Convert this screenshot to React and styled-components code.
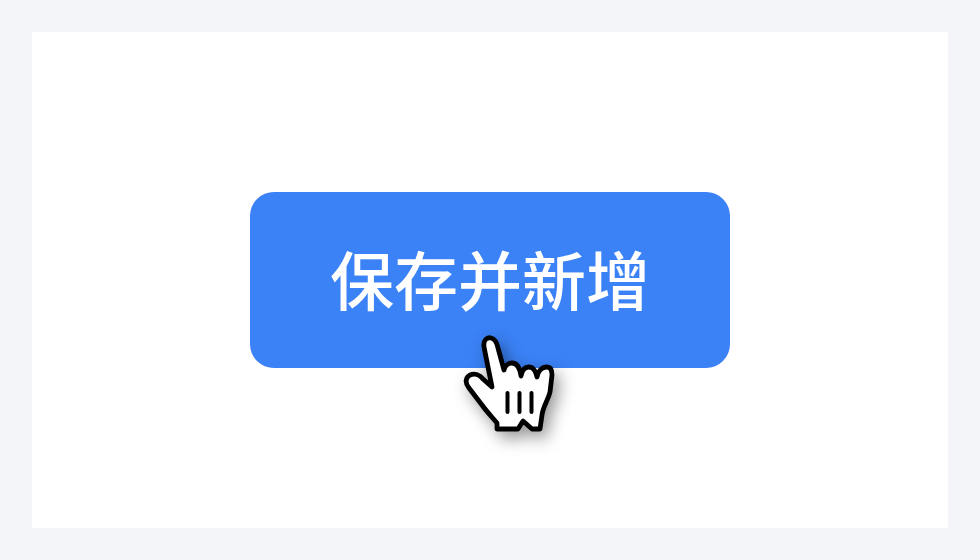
import React from 'react';
import styled, { createGlobalStyle } from 'styled-components';

const GlobalStyle = createGlobalStyle`
  html, body {
    margin: 0;
    padding: 0;
  }
  body {
    background-color: #f3f5f9;
  }
`;

const Page = styled.div`
  box-sizing: border-box;
  width: 980px;
  height: 560px;
  padding: 32px;
  background-color: #f3f5f9;
`;

const Panel = styled.main`
  display: flex;
  align-items: center;
  justify-content: center;
  height: 100%;
  background-color: #ffffff;
`;

const ButtonWrap = styled.div`
  position: relative;
  width: 480px;
  height: 176px;
`;

const SaveButton = styled.button`
  display: block;
  width: 100%;
  height: 100%;
  padding: 0 0 6px;
  border: 0;
  border-radius: 24px;
  background-color: #3b82f6;
  color: #ffffff;
  font-family: 'Noto Sans CJK SC', 'Noto Sans', sans-serif;
  font-size: 64px;
  font-weight: 500;
  line-height: 1;
`;

const Cursor = styled.svg`
  position: absolute;
  left: 200px;
  top: 133px;
  width: 120px;
  height: 120px;
  filter: drop-shadow(5px 7px 8px rgba(0, 0, 0, 0.4));
`;

const HandCursor = () => (
  <Cursor viewBox="0 0 120 120" aria-hidden="true">
    <path
      d="M34 22C33 15 37 12 41 13C45 14 47 18 48 23L54 45C55 40 59 38 62 38C67 38 70 44 71 51C72 45 75 42 79 42C84 42 86 47 87 52C88 46 92 42 97 42C101 42 102 46 102 50L100 67C98 75 93 82 92 90L90 104H82L73 96L68 104H47V98C42 92 37 87 32 80L19 63C15 58 15 53 20 50C25 48 30 50 33 54L42 62Z"
      fill="#ffffff"
      stroke="#000000"
      strokeWidth="4.8"
      strokeLinejoin="round"
    />
    <g stroke="#000000" strokeWidth="4" strokeLinecap="round">
      <line x1="57.5" y1="68" x2="57.5" y2="87" />
      <line x1="69.5" y1="68" x2="69.5" y2="87" />
      <line x1="81.5" y1="68" x2="81.5" y2="87" />
    </g>
  </Cursor>
);

export default function App() {
  return (
    <Page>
      <GlobalStyle />
      <Panel>
        <ButtonWrap>
          <SaveButton type="button">保存并新增</SaveButton>
          <HandCursor />
        </ButtonWrap>
      </Panel>
    </Page>
  );
}
